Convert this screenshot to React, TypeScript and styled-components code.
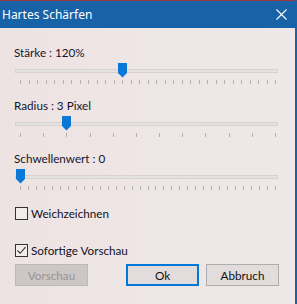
import React from "react";
import styled, { createGlobalStyle } from "styled-components";

const Global = createGlobalStyle`
  html, body { margin: 0; padding: 0; background: #eee5e5; }
  body { font-family: Lato, "Noto Sans", sans-serif; }
`;

const Window = styled.div`
  width: 297px;
  height: 304px;
  box-sizing: border-box;
  background: linear-gradient(90deg, #eee3e3 0%, #efe8e8 100%);
  border-right: 2px solid #1862a8;
  display: flex;
  flex-direction: column;
  overflow: hidden;
`;

const TitleBar = styled.div`
  height: 28px;
  box-sizing: border-box;
  margin-right: -2px;
  background: #1862a8;
  border-top: 1px solid #9c3a44;
  display: flex;
  align-items: center;
  justify-content: space-between;
  padding: 0 10px 0 2px;
  color: #ffffff;
  font-family: "Noto Sans", sans-serif;
  font-size: 12px;
`;

const Title = styled.span`
  line-height: 16px;
  margin-top: 1px;
`;

const Body = styled.div`
  flex: 1;
  display: flex;
  flex-direction: column;
  padding: 16px 16px 0 15px;
`;

const Section = styled.div<{ $gap: number }>`
  display: flex;
  flex-direction: column;
  margin-top: ${(p) => p.$gap}px;
`;

const Label = styled.div`
  font-size: 11.7px;
  line-height: 16px;
  color: #15152a;
  margin-left: -1px;
`;

const SliderArea = styled.div`
  position: relative;
  height: 16px;
  margin-top: 2px;
  width: 263px;
`;

const Track = styled.div`
  position: absolute;
  left: 0;
  right: 0;
  top: 7px;
  height: 4px;
  box-sizing: border-box;
  border: 1px solid #d7d1d1;
  background: #e6e2e2;
`;

const Thumb = styled.svg`
  position: absolute;
  top: 1px;
  width: 9px;
  height: 15px;
`;

const Ticks = styled.div`
  display: flex;
  justify-content: space-between;
  height: 5px;
  margin-top: 2px;
  width: 263px;
  box-sizing: border-box;
  padding: 0 2px 0 5px;
`;

const Tick = styled.span`
  width: 1px;
  height: 4px;
  background: #b5b0b0;
`;

const CheckRow = styled.label<{ $gap: number }>`
  display: flex;
  align-items: center;
  gap: 3px;
  height: 16px;
  margin-top: ${(p) => p.$gap}px;
  font-size: 11.7px;
  color: #111122;
`;

const Box = styled.span`
  width: 13px;
  height: 13px;
  box-sizing: border-box;
  border: 1px solid #333333;
  background: #f2ebeb;
  display: flex;
  align-items: center;
  justify-content: center;
`;

const ButtonRow = styled.div`
  display: flex;
  align-items: center;
  margin-top: 6px;
`;

const Spacer = styled.div`
  flex: 1;
`;

const Button = styled.button<{ $variant: "disabled" | "default" | "normal" }>`
  width: 73px;
  height: 22px;
  box-sizing: border-box;
  font-family: inherit;
  font-size: 11.7px;
  padding: 0;
  margin-left: ${(p) => (p.$variant === "normal" ? "7px" : "0")};
  background: ${(p) => (p.$variant === "disabled" ? "#cdc6c6" : "#e2dcdc")};
  color: ${(p) => (p.$variant === "disabled" ? "#9a9494" : "#111111")};
  border: ${(p) =>
    p.$variant === "default"
      ? "2px solid #0078d7"
      : p.$variant === "disabled"
      ? "1px solid #bdb7b7"
      : "1px solid #adadad"};
`;

type SliderProps = { label: string; ticks: number; index: number; gap: number };

const Slider: React.FC<SliderProps> = ({ label, ticks, index, gap }) => {
  const start = 5;
  const end = 260;
  const left = start + ((end - start) * index) / (ticks - 1) - 4;
  return (
    <Section $gap={gap}>
      <Label>{label}</Label>
      <SliderArea>
        <Track />
        <Thumb viewBox="0 0 9 15" style={{ left }}>
          <path d="M0 0 H9 V10 L4.5 14.5 L0 10 Z" fill="#0a78d7" />
        </Thumb>
      </SliderArea>
      <Ticks>
        {Array.from({ length: ticks }).map((_, i) => (
          <Tick key={i} />
        ))}
      </Ticks>
    </Section>
  );
};

export default function App() {
  return (
    <>
      <Global />
      <Window>
        <TitleBar>
          <Title>Hartes Schärfen</Title>
          <svg width="11" height="11" viewBox="0 0 11 11">
            <path d="M0.5 0.5 L10.5 10.5 M10.5 0.5 L0.5 10.5" stroke="#ffffff" strokeWidth="1.1" />
          </svg>
        </TitleBar>
        <Body>
          <Slider label="Stärke : 120%" ticks={31} index={12} gap={0} />
          <Slider label="Radius : 3 Pixel" ticks={12} index={2} gap={12} />
          <Slider label="Schwellenwert : 0" ticks={33} index={0} gap={12} />
          <CheckRow $gap={14}>
            <Box />
            Weichzeichnen
          </CheckRow>
          <CheckRow $gap={21}>
            <Box>
              <svg width="11" height="11" viewBox="0 0 11 11">
                <path d="M1.5 5.5 L4.2 8.3 L9.5 2.2" fill="none" stroke="#333333" strokeWidth="1.1" />
              </svg>
            </Box>
            Sofortige Vorschau
          </CheckRow>
          <ButtonRow>
            <Button $variant="disabled" disabled>Vorschau</Button>
            <Spacer />
            <Button $variant="default">Ok</Button>
            <Button $variant="normal">Abbruch</Button>
          </ButtonRow>
        </Body>
      </Window>
    </>
  );
}
